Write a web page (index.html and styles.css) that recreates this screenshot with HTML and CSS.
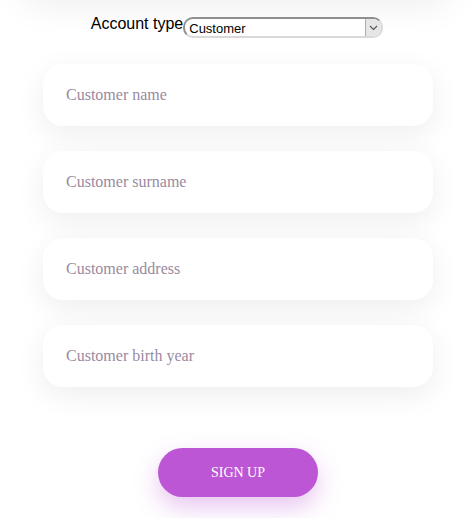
FILE: index.html
```html
<!DOCTYPE html>
<html>
<head>
<meta charset="utf-8">
<link rel="stylesheet" href="styles.css">
</head>
<body>
<div class="above"></div>
<form class="form">
  <div class="type-row">
    <label class="type-label" for="acct">Account type</label>
    <div class="select-wrap">
      <select id="acct" class="type-select">
        <option>Customer</option>
      </select>
      <span class="select-arrow">
        <svg width="9" height="6" viewBox="0 0 9 6"><path d="M1 1 L4.5 4.5 L8 1" fill="none" stroke="#555" stroke-width="1.1"/></svg>
      </span>
    </div>
  </div>
  <div class="fields">
    <input class="field" type="text" placeholder="Customer name">
    <input class="field" type="text" placeholder="Customer surname">
    <input class="field" type="text" placeholder="Customer address">
    <input class="field" type="text" placeholder="Customer birth year">
  </div>
  <div class="actions">
    <button class="signup" type="button">SIGN UP</button>
  </div>
</form>
</body>
</html>
```
FILE: styles.css
```css
html, body {
  margin: 0;
  padding: 0;
  background: #ffffff;
  overflow: hidden;
}
body {
  width: 473px;
  height: 518px;
  font-family: "Liberation Serif", serif;
}
.above {
  width: 420px;
  height: 100px;
  margin: -100px auto 0;
  box-shadow: 0 0 40px rgba(0, 0, 0, 0.09);
  background: #fff;
}
.form {
  display: flex;
  flex-direction: column;
  align-items: center;
  padding-left: 3px;
}
.type-row {
  display: flex;
  align-items: flex-start;
  justify-content: center;
  padding-top: 15px;
  margin-left: -2px;
}
.type-label {
  font-family: "Liberation Sans", Arial, sans-serif;
  font-size: 16px;
  line-height: 18px;
  color: #000;
}
.select-wrap {
  position: relative;
  width: 200px;
  height: 21px;
  margin-top: 2px;
}
.type-select {
  appearance: none;
  -webkit-appearance: none;
  width: 200px;
  height: 21px;
  box-sizing: border-box;
  border: 2px solid #8f8f8f;
  border-right-color: #d9d9d9;
  border-bottom-color: #d9d9d9;
  border-radius: 10px;
  background: #fff;
  font-family: "Liberation Sans", Arial, sans-serif;
  font-size: 13px;
  color: #000;
  padding: 1px 4px 0 4px;
  margin: 0;
  outline: none;
}
.select-arrow {
  position: absolute;
  right: 2px;
  top: 2px;
  width: 16px;
  height: 17px;
  box-sizing: border-box;
  background: #e6e6e6;
  border-left: 1px solid #adadad;
  border-radius: 0 8px 8px 0;
  display: flex;
  align-items: center;
  justify-content: center;
  padding-top: 1px;
}
.fields {
  display: flex;
  flex-direction: column;
  gap: 25px;
  margin-top: 26px;
}
.field {
  width: 390px;
  height: 62px;
  box-sizing: border-box;
  border: none;
  border-radius: 20px;
  background: #fff;
  box-shadow: 0 8px 30px rgba(0, 0, 0, 0.07);
  padding: 0 23px;
  font-family: "Liberation Serif", serif;
  font-size: 16px;
  color: #333;
  outline: none;
  margin: 0;
}
.field::placeholder {
  color: #9a8a9f;
}
.actions {
  margin-top: 61px;
}
.signup {
  width: 160px;
  height: 49px;
  border: none;
  border-radius: 25px;
  background: #bc56d4;
  color: #fff;
  font-family: "Liberation Serif", serif;
  font-size: 14px;
  letter-spacing: 0;
  box-shadow: 0 10px 25px rgba(188, 86, 212, 0.35);
  cursor: pointer;
}
```
